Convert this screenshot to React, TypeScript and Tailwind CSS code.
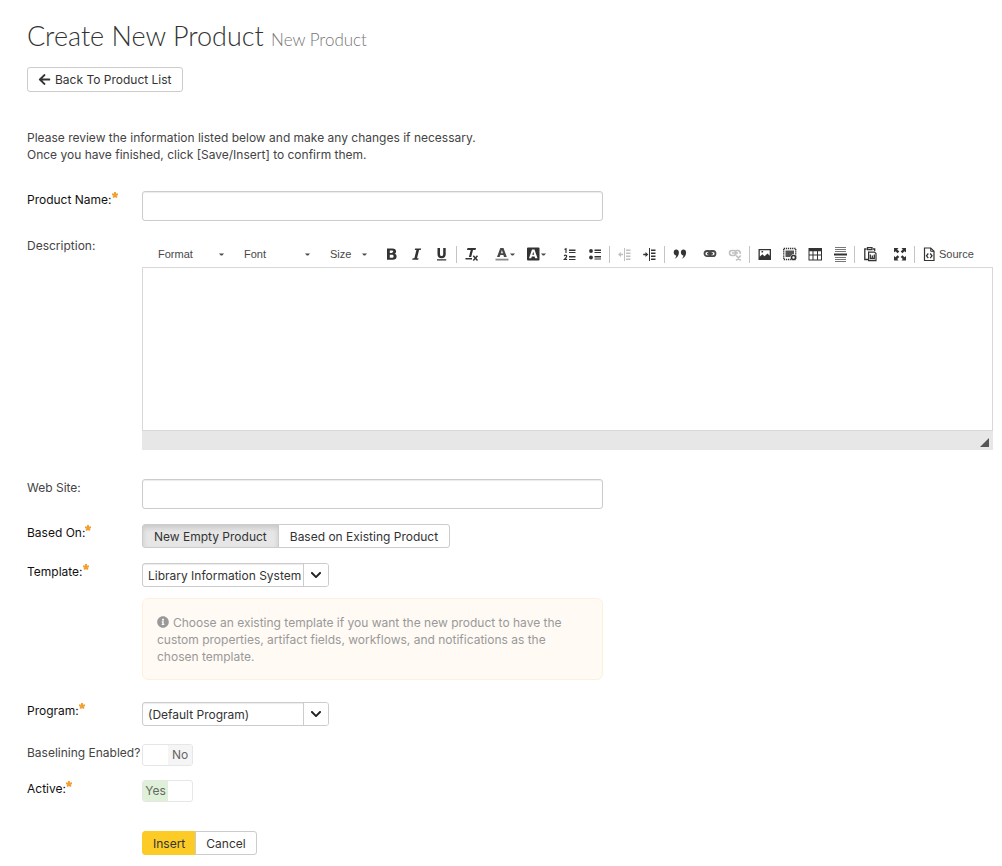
import { useState, type ReactNode } from "react";
import { FaArrowLeft, FaChevronDown, FaInfoCircle } from "react-icons/fa";

const BUTTON = "h-6 border border-[#ccc] text-[#333] whitespace-nowrap hover:bg-[#e6e6e6]";

function Row({
  label,
  id,
  required = false,
  className = "",
  children,
}: {
  label: string;
  id: string;
  required?: boolean;
  className?: string;
  children: ReactNode;
}) {
  return (
    <div className={`flex items-start ${className}`}>
      <label
        htmlFor={id}
        className={`flex w-[115px] shrink-0 whitespace-nowrap ${required ? "text-[#111]" : "text-[#444]"}`}
      >
        {label}
        {required && (
          <svg className="mt-px" width="6" height="6" viewBox="0 0 6 6" aria-hidden="true">
            <path
              d="M3 3V0M3 3L0 2.200M3 3l3-.8M3 3L1.200 5.600M3 3l1.800 2.600"
              stroke="#f1a02f"
              strokeWidth="1.900"
            />
          </svg>
        )}
      </label>
      <div className="min-w-0 flex-1">{children}</div>
    </div>
  );
}

function TextField({ id }: { id: string }) {
  return (
    <input
      id={id}
      type="text"
      className="block h-[30px] w-full max-w-[461px] rounded-[3px] border border-[#ccc] bg-white px-2 shadow-[inset_0_1px_1px_rgba(0,0,0,0.08)] outline-none focus:border-[#66afe9]"
    />
  );
}

function DropDown({ id, options }: { id: string; options: string[] }) {
  return (
    <div className="relative flex h-6 w-[187px] overflow-hidden rounded-[3px] border border-[#ccc] bg-white shadow-[inset_0_1px_1px_rgba(0,0,0,0.08)]">
      <select
        id={id}
        className="w-full appearance-none bg-transparent pr-[25px] pl-[5px] text-[#333] outline-none"
      >
        {options.map((option) => (
          <option key={option}>{option}</option>
        ))}
      </select>
      <span className="pointer-events-none absolute inset-y-0 right-0 flex w-[25px] items-center justify-center border-l border-[#ccc] bg-white text-[#222]">
        <FaChevronDown size={12} />
      </span>
    </div>
  );
}

function Toggle({ id, initial }: { id: string; initial: boolean }) {
  const [on, setOn] = useState(initial);
  return (
    <label
      htmlFor={id}
      className="relative flex h-[22px] w-[51px] cursor-pointer overflow-hidden rounded-[3px] border border-[#e6e6e6] bg-white leading-5 text-[#666]"
    >
      <input
        id={id}
        type="checkbox"
        checked={on}
        onChange={(e) => setOn(e.target.checked)}
        className="absolute inset-0 cursor-pointer appearance-none"
      />
      <span className={`w-[25px] text-center ${on ? "bg-[#dff0d8]" : ""}`}>{on ? "Yes" : ""}</span>
      <span className={`w-6 text-center ${on ? "" : "bg-[#f5f5f5]"}`}>{on ? "" : "No"}</span>
    </label>
  );
}

function Caret() {
  return (
    <svg width="5" height="3" viewBox="0 0 5 3" fill="#484848" aria-hidden="true">
      <path d="M0 .5h5L3.200 2.500H1.800z" />
    </svg>
  );
}

function Combo({ label, className }: { label: string; className: string }) {
  return (
    <button type="button" className={`flex h-6 items-center justify-between pr-2 pl-1.5 ${className}`}>
      {label}
      <Caret />
    </button>
  );
}

function Tool({
  title,
  className = "w-[25px]",
  disabled = false,
  menu = false,
  children,
}: {
  title: string;
  className?: string;
  disabled?: boolean;
  menu?: boolean;
  children: ReactNode;
}) {
  return (
    <button
      type="button"
      title={title}
      aria-label={title}
      disabled={disabled}
      className={`flex h-6 items-center justify-center hover:bg-[#e5e5e5] disabled:opacity-30 ${className}`}
    >
      <svg width="16" height="16" viewBox="0 0 16 16" fill="#333" stroke="none" aria-hidden="true">
        {children}
      </svg>
      {menu && <Caret />}
    </button>
  );
}

function Separator() {
  return <span className="mx-0.5 h-[17px] w-px bg-[#c4c4c4]" />;
}

function Toolbar() {
  return (
    <div className="flex min-h-[30px] flex-wrap items-center pt-1 pl-2.5 font-['Liberation_Sans',Arial,sans-serif] text-[11px] text-[#484848]">
      <div className="flex gap-1.5 pr-1">
        <Combo label="Format" className="w-20" />
        <Combo label="Font" className="w-20" />
        <Combo label="Size" className="w-[51px]" />
      </div>
      <Tool title="Bold">
        <path
          fillRule="evenodd"
          d="M3 2.500h5.500c2.300 0 3.600 1.100 3.600 2.900 0 1.200-.6 2-1.600 2.400 1.300.3 2.100 1.200 2.100 2.600 0 2.100-1.500 3.300-3.900 3.300H3zM5.800 4.500v2.400h1.900c1 0 1.500-.4 1.500-1.200s-.5-1.200-1.500-1.200zm0 4.200v3h2.100c1.100 0 1.700-.5 1.700-1.500s-.6-1.500-1.700-1.500z"
        />
      </Tool>
      <Tool title="Italic">
        <path d="M6.200 2.500h6L11.700 4h-1.600L8 12.300h1.600l-.4 1.500h-6l.5-1.500h1.700L7.400 4H5.700z" />
      </Tool>
      <Tool title="Underline">
        <path d="M3.500 2H6v6c0 1.400.6 2.100 1.600 2.100S9.200 9.400 9.200 8V2h2.500v6.200c0 2.500-1.500 4-4.100 4s-4.100-1.500-4.100-4zM3 13.200h9.200v1.200H3z" />
      </Tool>
      <Separator />
      <Tool title="Remove Format">
        <path d="M3.500 2H12l-.5 2H9L7.200 11H4.900L6.700 4H3zM1.500 12H8v1.500H1.500z" />
        <path d="M9.300 9.800l4.200 4.700m0-4.700l-4.200 4.700" stroke="#333" strokeWidth="1.500" />
      </Tool>
      <Tool title="Text Color" className="ml-[5px] w-[31px]" menu>
        <path fillRule="evenodd" d="M6.300 2h3.200l3.300 9H10l-.6-1.900H6.300L5.700 11H3zM7 7.200h1.900L7.900 4z" fill="#484848" />
        <path d="M1.500 12.700h13v1.800h-13z" fill="#8c8c8c" />
      </Tool>
      <Tool title="Background Color" className="w-[31px]" menu>
        <path
          fillRule="evenodd"
          d="M3 1.500h10.500q1 0 1 1v11q0 1-1 1H3q-1 0-1-1v-11q0-1 1-1zM7 3.500L4 12.300h2.200l.6-1.800h2.800l.6 1.800h2.300L9.500 3.500zM8.200 5.700l1 3.100H7.300z"
        />
      </Tool>
      <Tool title="Numbered List" className="ml-1.5 w-[25px]">
        <path d="M7 3.500h6.500V5H7zm0 2.600h6.500v1H7zm0 4h6.500v1.500H7zm0 2.800h6.500v1H7z" />
        <path
          d="M2.500 3.500L4 2.800V7M2.300 10.200q.3-1 1.200-1 1.200 0 1.200 1 0 .8-2.300 3.200h2.700"
          fill="none"
          stroke="#333"
          strokeWidth="1.200"
        />
      </Tool>
      <Tool title="Bulleted List">
        <circle cx="4" cy="5" r="1.900" />
        <circle cx="4" cy="11.500" r="1.900" />
        <path d="M7.500 3.500H14V5H7.500zm0 2.500H14v1H7.500zm0 4H14v1.500H7.500zm0 2.600H14v1H7.500z" />
      </Tool>
      <Separator />
      <Tool title="Decrease Indent" disabled>
        <path d="M7 2h1v13H7zM9 3.500h4.500V5H9zm0 3h4.500V8H9zm0 3h4.500V11H9zm0 3h4.500V14H9zM1 8.500l3-2.600v1.900h2v1.400H4v1.900z" />
      </Tool>
      <Tool title="Increase Indent">
        <path d="M7 2h1v13H7zM9 3.500h4.500V5H9zm0 3h4.500V8H9zm0 3h4.500V11H9zm0 3h4.500V14H9zM6.300 8.500L3.500 5.900v1.900H1.200v1.400h2.300v1.900z" />
      </Tool>
      <Separator />
      <Tool title="Block Quote">
        <path d="M4.200 3.500c1.600 0 2.700 1.200 2.700 3 0 2.900-1.700 5.300-4.500 6.500 1.200-1.300 1.700-2.400 1.800-3.600-1.500-.1-2.500-1.300-2.500-2.900 0-1.800 1-3 2.500-3zm7.200 0c1.600 0 2.700 1.200 2.700 3 0 2.900-1.700 5.300-4.500 6.500 1.200-1.300 1.700-2.400 1.800-3.600-1.500-.1-2.500-1.300-2.500-2.900 0-1.800 1-3 2.500-3z" />
      </Tool>
      <Tool title="Link" className="ml-[5px] w-[25px]">
        <g fill="none" stroke="#484848" strokeWidth="1.800">
          <rect x="2.500" y="5" width="6.500" height="5.200" rx="2.600" />
          <rect x="7" y="5" width="6.500" height="5.200" rx="2.600" />
          <path d="M5 7.600h6" />
        </g>
      </Tool>
      <Tool title="Unlink" disabled>
        <g fill="none" stroke="#333" strokeWidth="1.600">
          <rect x="2.500" y="4.500" width="6.500" height="5" rx="2.500" />
          <path d="M8.500 4.500h2.300a2.500 2.500 0 0 1 2.300 3.300M5 7h6M9.200 9.500l4.500 5m0-5l-4.500 5" />
        </g>
      </Tool>
      <Separator />
      <Tool title="Image">
        <path
          fillRule="evenodd"
          d="M1.500 3H14v11H1.500zm1.300 1.300v6.500l2.500-2.600 2.200 2.100 3-2.800 2.200 2.300V4.300zM4.500 5h1.600v1.600H4.500z"
        />
      </Tool>
      <Tool title="Select Block">
        <path d="M1.700 2.500h12v11h-12z" fill="none" stroke="#333" strokeWidth="1.400" strokeDasharray="1.300 .8" />
        <path d="M3.500 4.500H12V8l-2 .5L8 11H3.500z" fill="#555" />
        <circle cx="11.500" cy="11.500" r="2" fill="#fff" stroke="#333" strokeWidth="1.600" />
      </Tool>
      <Tool title="Table">
        <path
          fillRule="evenodd"
          d="M1.500 2H15v12.500H1.500zm1 3.200v3.300h3V5.200zm4 0v3.300H10V5.200zm4.500 0v3.300h3V5.200zM2.500 9.500v4h3v-4zm4 0v4H10v-4zm4.500 0v4h3v-4z"
        />
      </Tool>
      <Tool title="Horizontal Line">
        <path d="M3 1h11v1H3zm0 2h11v1H3zm0 2h11v1H3zm0 6h11v1H3zm0 2h11v1H3zm0 2h11v1H3z" fill="#777" />
        <path d="M2 7.500h13v2H2z" />
      </Tool>
      <Separator />
      <Tool title="Paste From Word">
        <path
          d="M4.500 3H2.800v10.500H6M11 3h1.700v2M5.500 1.700H10v2H5.500z"
          fill="none"
          stroke="#333"
          strokeWidth="1.300"
        />
        <path d="M6.600 6.200h6l1.400 1.400v7H6.600z" fill="#fff" stroke="#333" strokeWidth="1.200" />
        <path d="M8.300 8.500v4h4v-4M10.300 9.500v3" fill="none" stroke="#333" strokeWidth="1.300" />
      </Tool>
      <Tool title="Maximize" className="ml-[5px] w-[25px]">
        <path d="M2 2h4.500L5.200 3.500l2.100 2.100-1.700 1.700-2.100-2.100L2 6.500zm12 0v4.500l-1.500-1.300-2.100 2.100-1.700-1.700 2.100-2.100L9.500 2zM2 14.500V10l1.500 1.300 2.100-2.100 1.700 1.700L5.200 13l1.300 1.500zm12 0H9.500l1.300-1.500-2.100-2.100 1.700-1.700 2.100 2.100L14 10z" />
      </Tool>
      <Separator />
      <button
        type="button"
        title="Source"
        className="flex h-6 items-center gap-0.5 px-1 hover:bg-[#e5e5e5]"
      >
        <svg width="16" height="16" viewBox="0 0 16 16" fill="none" stroke="#333" aria-hidden="true">
          <path d="M3.500 2h6.200L13 5.300V14.500H3.500z" strokeWidth="1.200" />
          <path d="M9.700 2v3.300H13" />
          <path d="M7.300 7.500L5.500 9.800l1.800 2.300m1.900-4.600L11 9.800l-1.800 2.300" strokeWidth="1.300" />
        </svg>
        Source
      </button>
    </div>
  );
}

function Editor() {
  return (
    <div>
      <Toolbar />
      <textarea
        id="description"
        className="block h-[164px] w-full resize-none border border-[#d8d8d8] bg-white p-3 outline-none"
      />
      <div className="flex h-[19px] items-end justify-end bg-[#e7e7e7] p-1 pb-[3px]">
        <svg width="9" height="9" viewBox="0 0 9 9" fill="#555" aria-hidden="true">
          <path d="M9 0v9H0z" />
        </svg>
      </div>
    </div>
  );
}

export default function App() {
  const [existing, setExisting] = useState(false);
  const pressed = "bg-[#e6e6e6] shadow-[inset_0_3px_5px_rgba(0,0,0,0.125)]";

  return (
    <main className="bg-white pt-[19px] pr-[9px] pb-3 pl-[27px] font-['Inter','Open_Sans',sans-serif] text-xs leading-[17px] text-[#444]">
      <h1 className="font-['Lato',sans-serif] text-[27px] leading-[34px] font-light text-[#333]">
        Create New Product <small className="text-[17px] text-[#777]">New Product</small>
      </h1>
      <button
        type="button"
        className="mt-2.5 flex h-[25px] items-center gap-1 rounded-[3px] border border-[#ccc] bg-white px-2.5 text-[#333] hover:bg-[#e6e6e6]"
      >
        <FaArrowLeft size={13} />
        Back To Product List
      </button>
      <p className="mt-[37px]">
        Please review the information listed below and make any changes if necessary.
        <br />
        Once you have finished, click [Save/Insert] to confirm them.
      </p>

      <form className="mt-7" onSubmit={(e) => e.preventDefault()}>
        <Row label="Product Name:" id="product-name" required>
          <TextField id="product-name" />
        </Row>
        <Row label="Description:" id="description" className="mt-4">
          <Editor />
        </Row>
        <Row label="Web Site:" id="web-site" className="mt-[29px]">
          <TextField id="web-site" />
        </Row>
        <Row label="Based On:" id="based-on" required className="mt-[15px]">
          <div className="flex">
            <button
              id="based-on"
              type="button"
              aria-pressed={!existing}
              onClick={() => setExisting(false)}
              className={`${BUTTON} rounded-l-[3px] px-[11px] ${existing ? "bg-white" : pressed}`}
            >
              New Empty Product
            </button>
            <button
              type="button"
              aria-pressed={existing}
              onClick={() => setExisting(true)}
              className={`${BUTTON} -ml-px rounded-r-[3px] px-[11px] ${existing ? pressed : "bg-white"}`}
            >
              Based on Existing Product
            </button>
          </div>
        </Row>
        <Row label="Template:" id="template" required className="mt-[15px]">
          <DropDown id="template" options={["Library Information System"]} />
          <div className="mt-[11px] max-w-[461px] rounded-md border border-[#fdf1dd] bg-[#fffaf4] px-3.5 pt-[15px] pb-3.5 text-[#999]">
            <FaInfoCircle size={12} className="mr-1 inline align-[-1px]" />
            Choose an existing template if you want the new product to have the custom properties,
            artifact fields, workflows, and notifications as the chosen template.
          </div>
        </Row>
        <Row label="Program:" id="program" required className="mt-[22px]">
          <DropDown id="program" options={["(Default Program)"]} />
        </Row>
        <Row label="Baselining Enabled?" id="baselining" className="mt-[18px]">
          <Toggle id="baselining" initial={false} />
        </Row>
        <Row label="Active:" id="active" required className="mt-[14px]">
          <Toggle id="active" initial={true} />
        </Row>
        <div className="mt-[29px] flex pl-[115px]">
          <button
            type="submit"
            className="h-6 rounded-l-[3px] border border-[#fdcb26] bg-[#fdcb26] px-2.5 text-[#333]"
          >
            Insert
          </button>
          <button type="button" className={`${BUTTON} -ml-px rounded-r-[3px] bg-white px-2.5`}>
            Cancel
          </button>
        </div>
      </form>
    </main>
  );
}
